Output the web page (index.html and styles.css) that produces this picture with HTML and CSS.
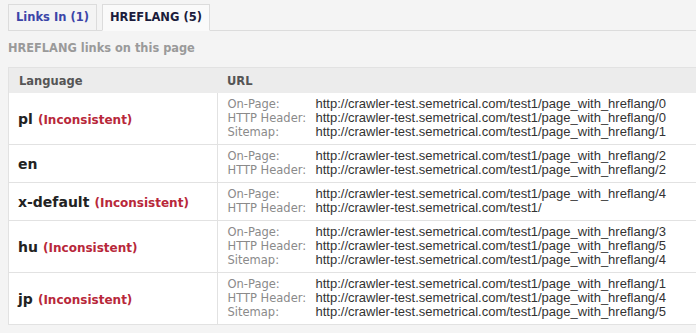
FILE: index.html
```html
<!DOCTYPE html>
<html lang="en">
<head>
    <meta charset="UTF-8">
    <title>HREFLANG</title>
    <link rel="stylesheet" href="styles.css">
</head>
<body>
    <div class="tabs">
        <a class="tab" href="#links-in">Links In (1)</a>
        <span class="tab active">HREFLANG (5)</span>
    </div>

    <h3 class="subtitle">HREFLANG links on this page</h3>

    <table class="hreflang">
        <thead>
            <tr>
                <th class="lang">Language</th>
                <th>URL</th>
            </tr>
        </thead>
        <tbody>
            <tr>
                <td class="lang"><span class="code">pl</span> <span class="bad">(Inconsistent)</span></td>
                <td>
                    <div class="src"><span class="label">On-Page:</span><span class="url">http://crawler-test.semetrical.com/test1/page_with_hreflang/0</span></div>
                    <div class="src"><span class="label">HTTP Header:</span><span class="url">http://crawler-test.semetrical.com/test1/page_with_hreflang/0</span></div>
                    <div class="src"><span class="label">Sitemap:</span><span class="url">http://crawler-test.semetrical.com/test1/page_with_hreflang/1</span></div>
                </td>
            </tr>
            <tr>
                <td class="lang"><span class="code">en</span></td>
                <td>
                    <div class="src"><span class="label">On-Page:</span><span class="url">http://crawler-test.semetrical.com/test1/page_with_hreflang/2</span></div>
                    <div class="src"><span class="label">HTTP Header:</span><span class="url">http://crawler-test.semetrical.com/test1/page_with_hreflang/2</span></div>
                </td>
            </tr>
            <tr>
                <td class="lang"><span class="code">x-default</span> <span class="bad">(Inconsistent)</span></td>
                <td>
                    <div class="src"><span class="label">On-Page:</span><span class="url">http://crawler-test.semetrical.com/test1/page_with_hreflang/4</span></div>
                    <div class="src"><span class="label">HTTP Header:</span><span class="url">http://crawler-test.semetrical.com/test1/</span></div>
                </td>
            </tr>
            <tr>
                <td class="lang"><span class="code">hu</span> <span class="bad">(Inconsistent)</span></td>
                <td>
                    <div class="src"><span class="label">On-Page:</span><span class="url">http://crawler-test.semetrical.com/test1/page_with_hreflang/3</span></div>
                    <div class="src"><span class="label">HTTP Header:</span><span class="url">http://crawler-test.semetrical.com/test1/page_with_hreflang/5</span></div>
                    <div class="src"><span class="label">Sitemap:</span><span class="url">http://crawler-test.semetrical.com/test1/page_with_hreflang/4</span></div>
                </td>
            </tr>
            <tr>
                <td class="lang"><span class="code">jp</span> <span class="bad">(Inconsistent)</span></td>
                <td>
                    <div class="src"><span class="label">On-Page:</span><span class="url">http://crawler-test.semetrical.com/test1/page_with_hreflang/1</span></div>
                    <div class="src"><span class="label">HTTP Header:</span><span class="url">http://crawler-test.semetrical.com/test1/page_with_hreflang/4</span></div>
                    <div class="src"><span class="label">Sitemap:</span><span class="url">http://crawler-test.semetrical.com/test1/page_with_hreflang/5</span></div>
                </td>
            </tr>
        </tbody>
    </table>
</body>
</html>
```

FILE: styles.css
```css
body {
    margin: 0;
    padding: 4px 0 0 8px;
    background-color: #f4f4f4;
    font-family: "DejaVu Sans", Verdana, sans-serif;
    overflow: hidden;
}

.tabs {
    display: flex;
    gap: 5px;
    border-bottom: 1px solid #dcdcdc;
}

.tab {
    display: block;
    height: 25px;
    line-height: 25px;
    padding: 0 7px;
    border: 1px solid #dcdcdc;
    margin-bottom: -1px;
    font-size: 11.5px;
    font-weight: bold;
    text-decoration: none;
    color: #3b45a8;
    background-color: #f4f4f4;
}

.tab.active {
    color: #1c1c3c;
    background-color: #fafafa;
    border-bottom-color: #fafafa;
}

.subtitle {
    margin: 10px 0 0;
    height: 26px;
    line-height: 14px;
    font-size: 11.4px;
    font-weight: bold;
    color: #9a9a9a;
}

.hreflang {
    width: calc(100% + 20px);
    border-collapse: collapse;
    background-color: #fff;
    border: 1px solid #e2e2e2;
}

.hreflang th {
    height: 25px;
    padding: 0 10px;
    text-align: left;
    font-size: 11.5px;
    font-weight: bold;
    color: #555;
    background-color: #ececec;
}

.hreflang th.lang,
.hreflang td.lang {
    width: 188px;
}

.hreflang td {
    padding: 4px 10px 5px;
    border-top: 1px solid #e2e2e2;
    vertical-align: top;
}

.hreflang thead + tbody tr:first-child td {
    border-top: none;
}

.hreflang td.lang {
    padding-left: 9px;
    vertical-align: middle;
    border-right: 1px solid #e2e2e2;
}

.code {
    font-size: 14px;
    font-weight: bold;
    color: #222;
}

.bad {
    font-size: 12px;
    font-weight: bold;
    color: #b8283a;
}

.src {
    display: flex;
    height: 14px;
    line-height: 14px;
}

.label {
    width: 88px;
    flex-shrink: 0;
    font-size: 11.5px;
    color: #8a8a8a;
}

.url {
    font-family: "Liberation Sans", Arial, sans-serif;
    font-size: 13px;
    color: #333;
}
```
